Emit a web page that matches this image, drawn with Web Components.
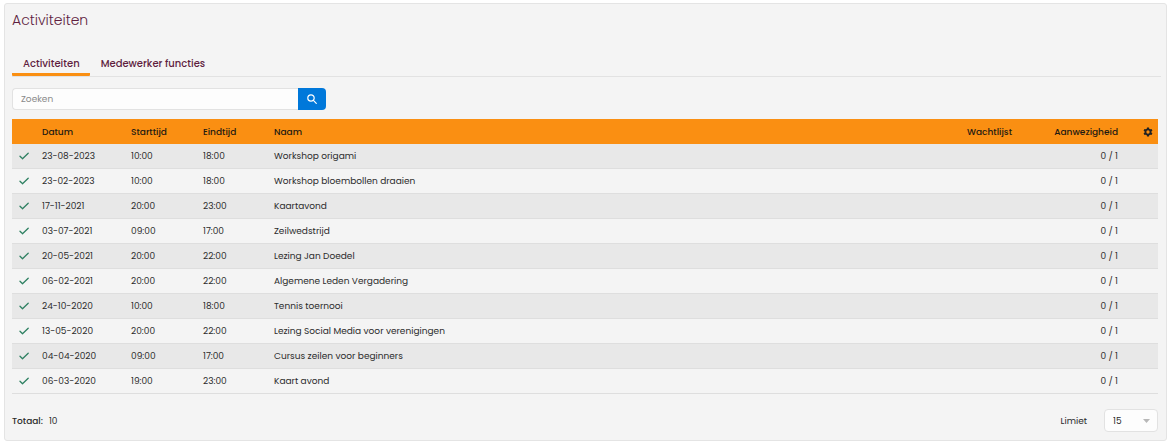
<!DOCTYPE html>
<html lang="nl">
<head>
<meta charset="utf-8">
<meta name="viewport" content="width=device-width, initial-scale=1">
<title>Activiteiten</title>
<style>
    body {
        margin: 0;
        padding: 3px 3px 6px 4px;
        background-color: #FFFFFF;
        color: #2B2B2B;
        font-family: Poppins, Inter, "Open Sans", sans-serif;
        font-size: 9px;
        line-height: 14px;

        --brand: #5F1E3F;
        --accent: #FA8F12;
        --line: #E2E2E2;
    }
</style>
</head>
<body>

<page-panel>
    <span slot="title">Activiteiten</span>
    <tab-bar>
        <tab-item active>Activiteiten</tab-item>
        <tab-item>Medewerker functies</tab-item>
    </tab-bar>
    <search-box placeholder="Zoeken"></search-box>
    <activity-table></activity-table>
    <table-footer>
        <span slot="total">10</span>
    </table-footer>
</page-panel>

<script>
const activities = [
    ["23-08-2023", "10:00", "18:00", "Workshop origami"],
    ["23-02-2023", "10:00", "18:00", "Workshop bloembollen draaien"],
    ["17-11-2021", "20:00", "23:00", "Kaartavond"],
    ["03-07-2021", "09:00", "17:00", "Zeilwedstrijd"],
    ["20-05-2021", "20:00", "22:00", "Lezing Jan Doedel"],
    ["06-02-2021", "20:00", "22:00", "Algemene Leden Vergadering"],
    ["24-10-2020", "10:00", "18:00", "Tennis toernooi"],
    ["13-05-2020", "20:00", "22:00", "Lezing Social Media voor verenigingen"],
    ["04-04-2020", "09:00", "17:00", "Cursus zeilen voor beginners"],
    ["06-03-2020", "19:00", "23:00", "Kaart avond"]
]

function makeTemplate(html) {
    const template = document.createElement("template")
    template.innerHTML = html
    return template
}

const pagePanelTemplate = makeTemplate(`
<style>
    :host {
        display: block;
        padding: 7px 8px 8px 7px;
        border: 1px solid #E4E4E4;
        border-radius: 3px;
        background-color: #F4F4F4;
    }

    h1 {
        margin: 0 0 25px;
        color: var(--brand);
        font-size: 14px;
        font-weight: 300;
        line-height: 18px;
    }
</style>

<h1><slot name="title"></slot></h1>
<slot></slot>
`)

const tabBarTemplate = makeTemplate(`
<style>
    :host {
        display: flex;
        margin: 0 -3px 11px 0;
        border-bottom: 1px solid var(--line);
    }
</style>

<slot></slot>
`)

const tabItemTemplate = makeTemplate(`
<style>
    :host {
        display: block;
    }

    button {
        display: block;
        padding: 3px 10px 2px 11px;
        border: 0;
        border-bottom: 3px solid transparent;
        border-radius: 1px;
        background: none;
        color: var(--brand);
        font: inherit;
        font-size: 10px;
        font-weight: 500;
        cursor: pointer;
    }

    :host([active]) button {
        border-bottom-color: var(--accent);
    }
</style>

<button type="button"><slot></slot></button>
`)

const searchBoxTemplate = makeTemplate(`
<style>
    :host {
        display: block;
        margin-bottom: 9px;
    }

    form {
        display: flex;
        width: 314px;
        max-width: 100%;
        height: 22px;
    }

    input {
        flex: 1;
        min-width: 0;
        box-sizing: border-box;
        padding: 0 8px;
        border: 1px solid #E2E2E2;
        border-right: 0;
        border-radius: 4px 0 0 4px;
        background-color: #FDFDFD;
        color: inherit;
        font: inherit;
    }

    input::placeholder {
        color: #8A8A8A;
    }

    button {
        display: flex;
        align-items: center;
        justify-content: center;
        width: 28px;
        padding: 0;
        border: 0;
        border-radius: 0 4px 4px 0;
        background-color: #0078DA;
        color: #FFFFFF;
        cursor: pointer;
    }
</style>

<form>
    <input type="text" aria-label="Zoeken">
    <button type="button" aria-label="Zoek">
        <svg width="10" height="10" viewBox="0 0 10 10" fill="none" stroke="currentColor" stroke-width="1.2" stroke-linecap="round">
            <circle cx="4" cy="4" r="3.2"/>
            <path d="M6.4 6.4 9.3 9.3"/>
        </svg>
    </button>
</form>
`)

const activityTableTemplate = makeTemplate(`
<style>
    :host {
        display: block;
    }

    table {
        width: 100%;
        border-collapse: separate;
        border-spacing: 0;
        table-layout: fixed;
    }

    th, td {
        box-sizing: border-box;
        height: 25px;
        padding: 0 4px;
        text-align: left;
        white-space: nowrap;
    }

    th {
        background-color: var(--accent);
        color: #1E1A12;
        font-weight: 500;
    }

    td {
        border-bottom: 1px solid #DEDEDE;
    }

    tbody tr:nth-child(odd) {
        background-color: #E8E8E8;
    }

    .status { width: 26px; }
    .date { width: 89px; }
    .start { width: 72px; }
    .end { width: 71px; }
    .waiting { width: 90px; }
    .presence { width: 106px; }
    .options { width: 36px; }

    .right {
        text-align: right;
    }

    .moment {
        font-variant-numeric: tabular-nums;
    }

    svg {
        display: block;
    }

    td svg {
        margin-left: 3px;
    }

    button {
        display: block;
        margin-left: auto;
        padding: 0 1px;
        border: 0;
        background: none;
        color: #222222;
        cursor: pointer;
    }
</style>

<table>
    <colgroup>
        <col class="status">
        <col class="date">
        <col class="start">
        <col class="end">
        <col>
        <col class="waiting">
        <col class="presence">
        <col class="options">
    </colgroup>
    <thead>
        <tr>
            <th></th>
            <th>Datum</th>
            <th>Starttijd</th>
            <th>Eindtijd</th>
            <th>Naam</th>
            <th class="right">Wachtlijst</th>
            <th class="right">Aanwezigheid</th>
            <th>
                <button type="button" aria-label="Kolommen instellen">
                    <svg width="10" height="10" viewBox="0 0 20 20" fill="currentColor">
                        <path fill-rule="evenodd" d="M8 1h4l.5 2.700 1.800 1 2.600-.9 2 3.400-2.100 1.800v2l2.100 1.800-2 3.400-2.600-.9-1.800 1L12 19H8l-.5-2.700-1.800-1-2.600.9-2-3.400L3.200 11V9L1.100 7.200l2-3.400 2.600.9 1.800-1zM10 6.700a3.300 3.300 0 1 0 0 6.600 3.300 3.300 0 0 0 0-6.600z"/>
                    </svg>
                </button>
            </th>
        </tr>
    </thead>
    <tbody></tbody>
</table>
`)

const activityRowTemplate = makeTemplate(`
<tr>
    <td>
        <svg width="10" height="8" viewBox="0 0 10 8" fill="none" stroke="#2E8062" stroke-width="1.300" stroke-linecap="round" stroke-linejoin="round">
            <path d="M1 4.200 3.500 6.700 9.200 1.200"/>
        </svg>
    </td>
    <td class="moment"></td>
    <td class="moment"></td>
    <td class="moment"></td>
    <td></td>
    <td></td>
    <td class="right">0 / 1</td>
    <td></td>
</tr>
`)

const tableFooterTemplate = makeTemplate(`
<style>
    :host {
        display: flex;
        align-items: center;
        justify-content: space-between;
        margin-top: 15px;
    }

    .total {
        display: flex;
        gap: 6px;
    }

    b {
        font-weight: 500;
    }

    .limit {
        display: flex;
        align-items: center;
        gap: 17px;
    }

    .select {
        display: grid;
        align-items: center;
        width: 54px;
    }

    select, .select svg {
        grid-area: 1 / 1;
    }

    select {
        appearance: none;
        box-sizing: border-box;
        width: 100%;
        height: 23px;
        padding: 0 8px;
        border: 1px solid #E2E2E2;
        border-radius: 4px;
        background-color: #FDFDFD;
        color: inherit;
        font: inherit;
    }

    .select svg {
        justify-self: end;
        margin-right: 8px;
        pointer-events: none;
    }
</style>

<div class="total">
    <b>Totaal:</b>
    <slot name="total"></slot>
</div>
<div class="limit">
    <label for="limit">Limiet</label>
    <div class="select">
        <select id="limit">
            <option>15</option>
            <option>25</option>
            <option>50</option>
        </select>
        <svg width="7" height="4" viewBox="0 0 7 4" fill="#B8B8B8"><path d="M0 0h7L3.500 4z"/></svg>
    </div>
</div>
`)

class PagePanel extends HTMLElement {
    constructor() {
        super()
        this.attachShadow({mode: "open"}).append(pagePanelTemplate.content.cloneNode(true))
    }
}

class TabBar extends HTMLElement {
    constructor() {
        super()
        this.attachShadow({mode: "open"}).append(tabBarTemplate.content.cloneNode(true))
    }

    connectedCallback() {
        // move the active marker to the clicked tab
        this.addEventListener("click", (event) => {
            const tab = event.target.closest("tab-item")
            if (!tab) return

            this.querySelectorAll("tab-item").forEach((item) => {
                item.toggleAttribute("active", item === tab)
            })
        })
    }
}

class TabItem extends HTMLElement {
    constructor() {
        super()
        this.attachShadow({mode: "open"}).append(tabItemTemplate.content.cloneNode(true))
    }
}

class SearchBox extends HTMLElement {
    constructor() {
        super()
        this.attachShadow({mode: "open"}).append(searchBoxTemplate.content.cloneNode(true))
    }

    connectedCallback() {
        this.shadowRoot.querySelector("input").placeholder = this.getAttribute("placeholder") || ""
    }
}

class ActivityTable extends HTMLElement {
    constructor() {
        super()
        this.attachShadow({mode: "open"}).append(activityTableTemplate.content.cloneNode(true))
    }

    connectedCallback() {
        const body = this.shadowRoot.querySelector("tbody")

        activities.forEach((activity) => {
            const row = activityRowTemplate.content.cloneNode(true)
            const cells = row.querySelectorAll("td")

            // first cell holds the check mark
            activity.forEach((value, i) => {
                cells[i + 1].textContent = value
            })
            body.append(row)
        })
    }
}

class TableFooter extends HTMLElement {
    constructor() {
        super()
        this.attachShadow({mode: "open"}).append(tableFooterTemplate.content.cloneNode(true))
    }
}

customElements.define("page-panel", PagePanel)
customElements.define("tab-bar", TabBar)
customElements.define("tab-item", TabItem)
customElements.define("search-box", SearchBox)
customElements.define("activity-table", ActivityTable)
customElements.define("table-footer", TableFooter)
</script>
</body>
</html>
